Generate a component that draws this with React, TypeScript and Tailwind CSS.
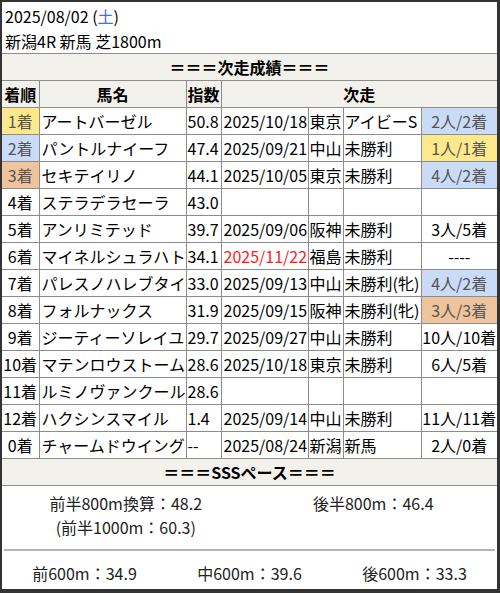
import React from 'react';

type Row = {
  rank: string;
  name: string;
  index: string;
  date?: string;
  venue?: string;
  race?: string;
  result?: string;
  rankBg?: string;
  resultBg?: string;
  redDate?: boolean;
};

const YELLOW = 'bg-[#fde98b] text-[#555]';
const BLUE = 'bg-[#c9dbf7] text-[#555]';
const ORANGE = 'bg-[#efc49c] text-[#555]';

const rows: Row[] = [
  { rank: '1着', name: 'アートバーゼル', index: '50.8', date: '2025/10/18', venue: '東京', race: 'アイビーS', result: '2人/2着', rankBg: YELLOW, resultBg: BLUE },
  { rank: '2着', name: 'パントルナイーフ', index: '47.4', date: '2025/09/21', venue: '中山', race: '未勝利', result: '1人/1着', rankBg: BLUE, resultBg: YELLOW },
  { rank: '3着', name: 'セキテイリノ', index: '44.1', date: '2025/10/05', venue: '東京', race: '未勝利', result: '4人/2着', rankBg: ORANGE, resultBg: BLUE },
  { rank: '4着', name: 'ステラデラセーラ', index: '43.0' },
  { rank: '5着', name: 'アンリミテッド', index: '39.7', date: '2025/09/06', venue: '阪神', race: '未勝利', result: '3人/5着' },
  { rank: '6着', name: 'マイネルシュラハト', index: '34.1', date: '2025/11/22', venue: '福島', race: '未勝利', result: '----', redDate: true },
  { rank: '7着', name: 'パレスノハレブタイ', index: '33.0', date: '2025/09/13', venue: '中山', race: '未勝利(牝)', result: '4人/2着', resultBg: BLUE },
  { rank: '8着', name: 'フォルナックス', index: '31.9', date: '2025/09/15', venue: '阪神', race: '未勝利(牝)', result: '3人/3着', resultBg: ORANGE },
  { rank: '9着', name: 'ジーティーソレイユ', index: '29.7', date: '2025/09/27', venue: '中山', race: '未勝利', result: '10人/10着' },
  { rank: '10着', name: 'マテンロウストーム', index: '28.6', date: '2025/10/18', venue: '東京', race: '未勝利', result: '6人/5着' },
  { rank: '11着', name: 'ルミノヴァンクール', index: '28.6' },
  { rank: '12着', name: 'ハクシンスマイル', index: '1.4', date: '2025/09/14', venue: '中山', race: '未勝利', result: '11人/11着' },
  { rank: '0着', name: 'チャームドウイング', index: '--', date: '2025/08/24', venue: '新潟', race: '新馬', result: '2人/0着' },
];

const cell = 'border border-[#8c8c8c] h-[27px] p-0 leading-[26px] whitespace-nowrap overflow-hidden';

const App: React.FC = () => {
  return (
    <div
      className="w-[500px] h-[593px] bg-white text-black text-[16px] border-t-2 border-l-2 border-r-[3px] border-b-[4px] border-[#333] overflow-hidden"
      style={{ fontFamily: '"Noto Sans CJK JP", "Noto Sans", sans-serif' }}
    >
      {/* レース情報 */}
      <div className="h-[51px] pl-[3px] pt-[2px] leading-[25px]">
        <div>
          2025/08/02 (<span className="text-[#4a6fd0]">土</span>)
        </div>
        <div>新潟4R 新馬 芝1800m</div>
      </div>

      <table className="w-[495px] table-fixed border-collapse">
        <colgroup>
          <col className="w-[37px]" />
          <col className="w-[147px]" />
          <col className="w-[35px]" />
          <col className="w-[87px]" />
          <col className="w-[35px]" />
          <col className="w-[78px]" />
          <col className="w-[76px]" />
        </colgroup>
        <tbody>
          <tr className="bg-[#f2f1ec] font-bold">
            <td colSpan={7} className={`${cell} border-l-0 border-r-0 text-center`}>
              ＝＝＝次走成績＝＝＝
            </td>
          </tr>
          <tr className="bg-[#f2f1ec] font-bold">
            <td className={`${cell} border-l-0 text-center`}>着順</td>
            <td className={`${cell} text-center`}>馬名</td>
            <td className={`${cell} text-center`}>指数</td>
            <td colSpan={4} className={`${cell} border-r-0 text-center`}>次走</td>
          </tr>
          {rows.map((r) => (
            <tr key={r.rank + r.name}>
              <td className={`${cell} border-l-0 text-center ${r.rankBg ?? ''}`}>{r.rank}</td>
              <td className={`${cell} pl-[2px]`}>{r.name}</td>
              <td className={`${cell} pl-[1px]`}>{r.index}</td>
              <td className={`${cell} pl-[2px] ${r.redDate ? 'text-[#ff1a1a]' : ''}`}>{r.date ?? ''}</td>
              <td className={`${cell} pl-[1px]`}>{r.venue ?? ''}</td>
              <td className={`${cell} pl-[1px]`}>{r.race ?? ''}</td>
              <td className={`${cell} border-r-0 text-center ${r.resultBg ?? ''}`}>{r.result ?? ''}</td>
            </tr>
          ))}
          <tr className="bg-[#f2f1ec] font-bold">
            <td colSpan={7} className={`${cell} border-l-0 border-r-0 text-center`}>
              ＝＝＝SSSペース＝＝＝
            </td>
          </tr>
        </tbody>
      </table>

      {/* ペース */}
      <div className="grid grid-cols-2 pt-[5px] leading-[24px] text-[#222]">
        <div className="flex flex-col items-center">
          <span>前半800m換算：48.2</span>
          <span>(前半1000m：60.3)</span>
        </div>
        <div className="flex flex-col items-center">
          <span>後半800m：46.4</span>
        </div>
      </div>
      <div className="mx-[2px] mt-[10px] border-t-2 border-[#b5b5b5]" />
      <div className="grid grid-cols-3 pt-[10px] leading-[24px] text-[#222]">
        <div className="text-center">前600m：34.9</div>
        <div className="text-center">中600m：39.6</div>
        <div className="text-center">後600m：33.3</div>
      </div>
    </div>
  );
};

export default App;
